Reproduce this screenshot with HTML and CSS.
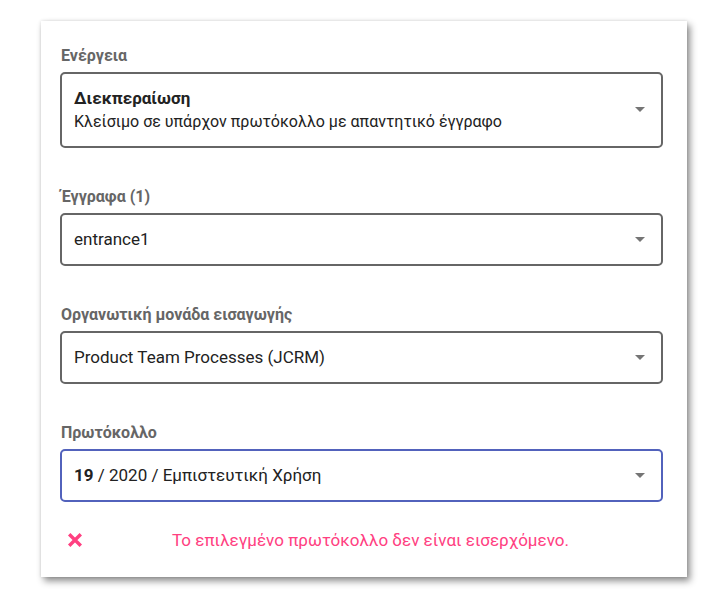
FILE: index.html
```html
<!DOCTYPE html>
<html lang="el">
<head>
<meta charset="utf-8">
<link rel="stylesheet" href="styles.css">
</head>
<body>
<div class="card">
  <div class="field">
    <div class="label">Ενέργεια</div>
    <div class="select tall">
      <div class="value">
        <div class="strong">Διεκπεραίωση</div>
        <div class="sub">Κλείσιμο σε υπάρχον πρωτόκολλο με απαντητικό έγγραφο</div>
      </div>
      <span class="arrow"></span>
    </div>
  </div>
  <div class="field">
    <div class="label">Έγγραφα (1)</div>
    <div class="select">
      <div class="value">entrance1</div>
      <span class="arrow"></span>
    </div>
  </div>
  <div class="field">
    <div class="label">Οργανωτική μονάδα εισαγωγής</div>
    <div class="select">
      <div class="value">Product Team Processes (JCRM)</div>
      <span class="arrow"></span>
    </div>
  </div>
  <div class="field last">
    <div class="label">Πρωτόκολλο</div>
    <div class="select focused">
      <div class="value"><b>19</b> / 2020 / Εμπιστευτική Χρήση</div>
      <span class="arrow"></span>
    </div>
  </div>
  <div class="error">
    <svg class="err-icon" viewBox="0 0 24 24" width="24" height="24"><path d="M6.2 6.2 17.8 17.8 M17.8 6.2 6.2 17.8" stroke="#ff4081" stroke-width="3.4" fill="none"/></svg>
    <span class="err-text">Το επιλεγμένο πρωτόκολλο δεν είναι εισερχόμενο.</span>
  </div>
</div>
</body>
</html>
```
FILE: styles.css
```css
html, body {
  margin: 0;
  background: #ffffff;
  font-family: Roboto, "Noto Sans", sans-serif;
}
body {
  padding: 21px 0 23px 41px;
}
.card {
  box-sizing: border-box;
  width: 646px;
  height: 556px;
  background: #fff;
  padding: 25px 24px 0 19px;
  box-shadow: 3px 4px 7px rgba(0,0,0,0.45), 0 0 3px rgba(0,0,0,0.12);
}
.field {
  margin-bottom: 39px;
}
.field.last {
  margin-bottom: 0;
}
.label {
  font-size: 16px;
  font-weight: 700;
  line-height: 20px;
  color: #666;
  margin-bottom: 6px;
  padding-left: 1px;
}
.select {
  box-sizing: border-box;
  height: 53px;
  border: 2px solid #666;
  border-radius: 5px;
  display: flex;
  align-items: center;
  padding: 0 16px 0 12px;
}
.select.tall {
  height: 76px;
}
.select.focused {
  border-color: #5262bc;
}
.value {
  flex: 1;
  font-size: 17px;
  line-height: 23px;
  color: #222;
}
.value .sub {
  font-size: 16px;
}
.strong, .value b {
  font-weight: 700;
}
.arrow {
  width: 0;
  height: 0;
  border-left: 5px solid transparent;
  border-right: 5px solid transparent;
  border-top: 5px solid #757575;
  margin-top: -1px;
}
.error {
  display: flex;
  align-items: center;
  margin-top: 26px;
  height: 24px;
}
.err-icon {
  margin-left: 3px;
  width: 24px;
  height: 24px;
}
.err-text {
  margin-left: 85px;
  font-size: 17px;
  color: #ff4081;
}
```
